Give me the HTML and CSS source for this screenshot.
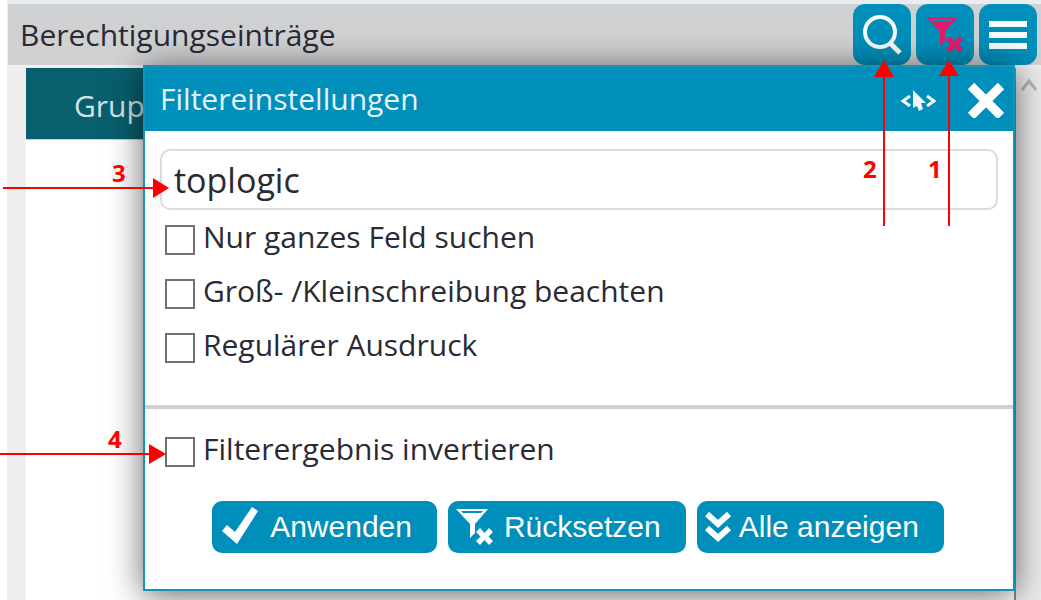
FILE: index.html
```
<!DOCTYPE html>
<html lang="de">
<head>
<meta charset="utf-8">
<title>Berechtigungseinträge</title>
<link rel="stylesheet" href="styles.css">
</head>
<body>
<svg class="defs" aria-hidden="true">
  <symbol id="filter-reset" viewBox="0 0 38 38">
    <path fill-rule="evenodd" d="M0 1H32L19 16V25L14 30V16ZM5 3L7 5H25L27 3Z"/>
    <path d="M20 24L24 20L28.500 25L33 20L37 24L32.500 28.500L37 33L33 37L28.500 32L24 37L20 33L24.500 28.500Z"/>
  </symbol>
</svg>
<main class="view">
  <header class="toolbar">
    <h1 class="toolbar-title">Berechtigungseinträge</h1>
    <button class="tool" type="button" aria-label="Suchen">
      <svg width="40" height="40" viewBox="0 0 40 40" fill="none" stroke="#f7fbfc"><circle cx="18" cy="17" r="15" stroke-width="4"/><path d="M28 28L38 38" stroke-width="5"/></svg>
    </button>
    <button class="tool" type="button" aria-label="Filter zurücksetzen">
      <svg class="pink" width="38" height="38"><use href="#filter-reset"/></svg>
    </button>
    <button class="tool" type="button" aria-label="Menü">
      <svg width="40" height="40" viewBox="0 0 40 40" fill="#f7fbfc"><path d="M1 6H39V12H1ZM1 17H39V23H1ZM1 28H39V34H1Z"/></svg>
    </button>
  </header>
  <div class="content">
    <div class="grid"><div class="grid-head">Grup</div></div>
    <div class="scrollbar">
      <svg width="18" height="14" viewBox="0 0 18 14" fill="none" stroke="#b5b5b5" stroke-width="3"><path d="M2 12L9 3L16 12"/></svg>
    </div>
  </div>
</main>

<form class="dialog" role="dialog" aria-labelledby="dialog-title">
  <header class="dialog-head">
    <h2 class="dialog-title" id="dialog-title">Filtereinstellungen</h2>
    <button class="head-button" type="button" aria-label="Element auswählen">
      <svg width="38" height="24" viewBox="0 0 38 24"><path d="M11 9L4 14L11 19M28 9L35 14L28 19" fill="none" stroke="#f2f8fa" stroke-width="3"/><path d="M14 3L27 16H22L24 22L20 24L18 19L14 21Z" fill="#f2f8fa"/></svg>
    </button>
    <button class="head-button" type="button" aria-label="Schließen">
      <svg width="38" height="38" viewBox="0 0 38 38"><path d="M4 6L34 36M34 6L4 36" stroke="#fff" stroke-width="9"/></svg>
    </button>
  </header>
  <div class="fields">
    <input class="search" type="text" value="toplogic" aria-label="Suchtext">
    <label class="check"><input type="checkbox">Nur ganzes Feld suchen</label>
    <label class="check"><input type="checkbox">Groß- /Kleinschreibung beachten</label>
    <label class="check"><input type="checkbox">Regulärer Ausdruck</label>
  </div>
  <div class="invert">
    <label class="check"><input type="checkbox">Filterergebnis invertieren</label>
  </div>
  <div class="actions">
    <button class="action" type="button">
      <svg width="40" height="40" viewBox="0 0 40 40" fill="#fff"><path d="M2 24L7 18L15 25L32 0L38 4L17 37Z"/></svg>Anwenden
    </button>
    <button class="action" type="button">
      <svg width="38" height="38" fill="#fff"><use href="#filter-reset"/></svg>Rücksetzen
    </button>
    <button class="action compact" type="button">
      <svg width="26" height="32" viewBox="0 0 26 32" fill="none" stroke="#fff" stroke-width="6"><path d="M2 3L13 13L24 3M2 17L13 27L24 17"/></svg>Alle anzeigen
    </button>
  </div>
</form>

<div class="notes">
  <svg class="arrows" width="1041" height="600" viewBox="0 0 1041 600" fill="#f00">
    <path d="M883 76H885V226H883ZM884 60L894 77H874Z"/>
    <path d="M948 76H950V226H948ZM949 60L959 76H939Z"/>
    <path d="M3 187H154V189H3ZM169 188L153 198V178Z"/>
    <path d="M0 453H150V455H0ZM166 454L149 464V444Z"/>
  </svg>
  <span class="note note-1">1</span>
  <span class="note note-2">2</span>
  <span class="note note-3">3</span>
  <span class="note note-4">4</span>
</div>
</body>
</html>
```
FILE: styles.css
```
* { box-sizing: border-box; }
body {
  margin: 0;
  min-height: 100vh;
  position: relative;
  overflow: hidden;
  background: #fff;
  color: #2a2a33;
  font: 400 30px/40px "Open Sans", sans-serif;
}
h1, h2 { margin: 0; font: inherit; }
button { border: 0; padding: 0; color: #fff; background: #008fba; }
svg { display: block; flex: none; }
.defs { position: absolute; width: 0; height: 0; }
.view {
  display: flex;
  flex-direction: column;
  min-height: 100vh;
  margin-left: 7px;
  padding-top: 4px;
  background: linear-gradient(#e9edf0 4px, #efefef 4px);
}
.toolbar {
  display: flex;
  align-items: center;
  gap: 5px;
  height: 61px;
  margin-left: 1px;
  padding: 0 4px 0 12px;
  background: #d0d1d3;
}
.toolbar-title { flex: 1; }
.tool {
  display: grid;
  place-items: center;
  width: 58px;
  height: 61px;
  border-radius: 12px;
}
.pink { fill: #e31b6d; }
.content { flex: 1; display: flex; padding: 3px 0 0 19px; }
.grid { flex: 1; background: #fff; border-right: 2px solid #8a8a8a; }
.grid-head {
  height: 72px;
  padding: 18px 48px;
  border-bottom: 1px solid #b4d2d8;
  background: #085f6d;
  color: #d4e4e6;
}
.scrollbar { display: flex; justify-content: center; width: 25px; padding-top: 10px; background: #ebebeb; }
.dialog {
  position: absolute;
  top: 65px;
  left: 143px;
  right: 26px;
  border: 2px solid #1593b6;
  background: #fff;
  box-shadow: 0 4px 32px rgba(0, 0, 0, .6);
}
.dialog-head {
  display: flex;
  align-items: center;
  gap: 30px;
  height: 64px;
  padding: 0 8px 0 15px;
  background: #008fba;
  color: #e4f4f9;
}
.dialog-title { flex: 1; }
.head-button { display: grid; place-items: center; }
.fields {
  display: flex;
  flex-direction: column;
  gap: 14px;
  padding: 18px 15px 40px;
}
.search {
  width: 100%;
  height: 61px;
  margin-bottom: -7px;
  padding: 0 12px;
  border: 2px solid #dadcdc;
  border-radius: 10px;
  background: #fff;
  color: inherit;
  font: 400 34px/40px "Open Sans", sans-serif;
}
.check { display: flex; align-items: center; gap: 8px; padding-left: 5px; }
.check input {
  appearance: none;
  flex: none;
  width: 30px;
  height: 30px;
  margin: 6px 0 0;
  border: 2px solid #707070;
  background: #fff;
}
.invert { padding: 20px 15px 0; border-top: 4px solid #cfcfcf; }
.actions {
  display: flex;
  justify-content: center;
  gap: 11px;
  padding: 32px 2px 36px 0;
}
.action {
  display: flex;
  align-items: center;
  gap: 10px;
  height: 52px;
  padding: 0 25px 0 8px;
  border-radius: 10px;
  font: 30px/36px "Liberation Sans", Arial, sans-serif;
}
.compact { gap: 8px; }
.notes { position: absolute; inset: 0; pointer-events: none; }
.note { position: absolute; color: #f00; font: 700 24px/30px "Open Sans", sans-serif; }
.note-1 { left: 928px; top: 154px; }
.note-2 { left: 863px; top: 154px; }
.note-3 { left: 112px; top: 158px; }
.note-4 { left: 108px; top: 424px; }
```
